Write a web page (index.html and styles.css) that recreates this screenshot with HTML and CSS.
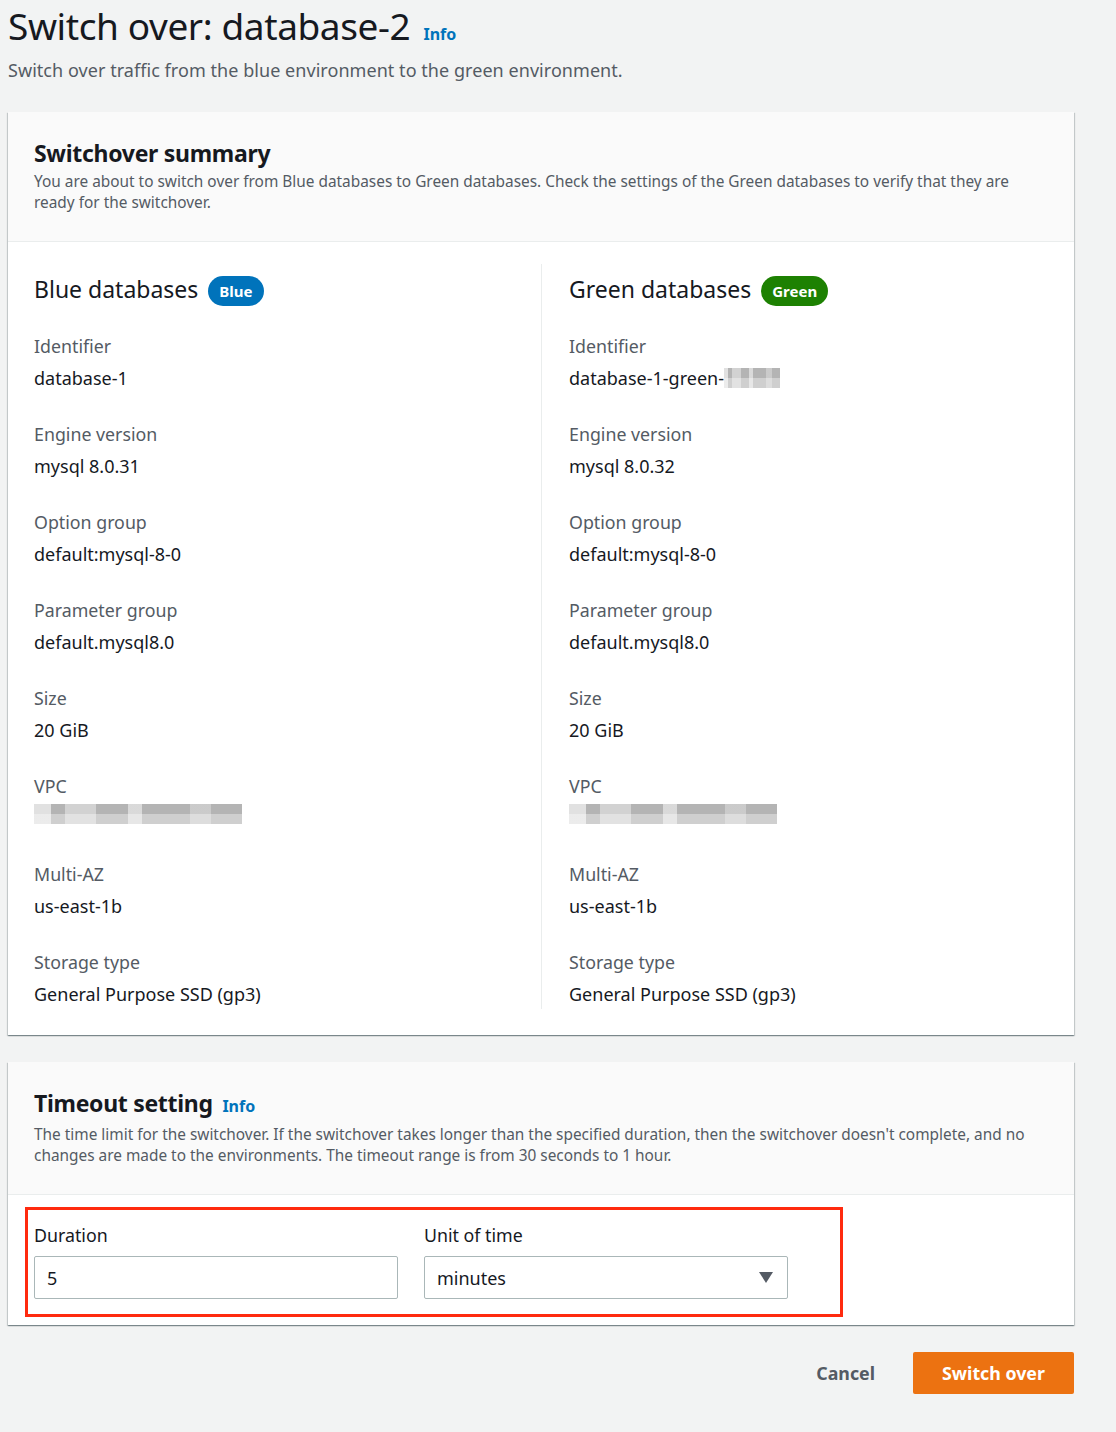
FILE: index.html
```html
<!DOCTYPE html>
<html lang="en">
<head>
    <meta charset="UTF-8">
    <title>Switch over: database-2</title>
    <link rel="stylesheet" href="styles.css">
</head>
<body>
    <div class="page">
        <div class="page-header">
            <h1>Switch over: database-2 <a class="info" href="#">Info</a></h1>
            <p class="subtitle">Switch over traffic from the blue environment to the green environment.</p>
        </div>

        <div class="card">
            <div class="card-header">
                <h2>Switchover summary</h2>
                <p>You are about to switch over from Blue databases to Green databases. Check the settings of the Green databases to verify that they are ready for the switchover.</p>
            </div>
            <div class="card-body columns">
                <div class="column">
                    <h3>Blue databases <span class="badge blue">Blue</span></h3>
                    <div class="field"><div class="label">Identifier</div><div class="value">database-1</div></div>
                    <div class="field"><div class="label">Engine version</div><div class="value">mysql 8.0.31</div></div>
                    <div class="field"><div class="label">Option group</div><div class="value">default:mysql-8-0</div></div>
                    <div class="field"><div class="label">Parameter group</div><div class="value">default.mysql8.0</div></div>
                    <div class="field"><div class="label">Size</div><div class="value">20 GiB</div></div>
                    <div class="field"><div class="label">VPC</div><div class="value"><span class="blur wide"></span></div></div>
                    <div class="field"><div class="label">Multi-AZ</div><div class="value">us-east-1b</div></div>
                    <div class="field"><div class="label">Storage type</div><div class="value">General Purpose SSD (gp3)</div></div>
                </div>
                <div class="column">
                    <h3>Green databases <span class="badge green">Green</span></h3>
                    <div class="field"><div class="label">Identifier</div><div class="value">database-1-green-<span class="blur short"></span></div></div>
                    <div class="field"><div class="label">Engine version</div><div class="value">mysql 8.0.32</div></div>
                    <div class="field"><div class="label">Option group</div><div class="value">default:mysql-8-0</div></div>
                    <div class="field"><div class="label">Parameter group</div><div class="value">default.mysql8.0</div></div>
                    <div class="field"><div class="label">Size</div><div class="value">20 GiB</div></div>
                    <div class="field"><div class="label">VPC</div><div class="value"><span class="blur wide"></span></div></div>
                    <div class="field"><div class="label">Multi-AZ</div><div class="value">us-east-1b</div></div>
                    <div class="field"><div class="label">Storage type</div><div class="value">General Purpose SSD (gp3)</div></div>
                </div>
            </div>
        </div>

        <div class="card">
            <div class="card-header">
                <h2>Timeout setting <a class="info" href="#">Info</a></h2>
                <p>The time limit for the switchover. If the switchover takes longer than the specified duration, then the switchover doesn't complete, and no changes are made to the environments. The timeout range is from 30 seconds to 1 hour.</p>
            </div>
            <div class="card-body form-body">
                <div class="highlight">
                    <div class="form-field">
                        <label>Duration</label>
                        <div class="input">5</div>
                    </div>
                    <div class="form-field">
                        <label>Unit of time</label>
                        <div class="input select">minutes <span class="caret"></span></div>
                    </div>
                </div>
            </div>
        </div>

        <div class="actions">
            <button class="link-btn">Cancel</button>
            <button class="primary-btn">Switch over</button>
        </div>
    </div>
</body>
</html>
```

FILE: styles.css
```css
:root {
    --text: #16191f;
    --muted: #545b64;
    --link: #0073bb;
    --border: #eaeded;
    --bg: #f2f3f3;
}

* {
    box-sizing: border-box;
    margin: 0;
    padding: 0;
}

body {
    background: var(--bg);
    color: var(--text);
    font-family: 'Noto Sans', 'Open Sans', sans-serif;
    padding: 0 8px;
}

.page {
    width: 1066px;
}

h1 {
    font-size: 37px;
    font-weight: 400;
    line-height: 52px;
    letter-spacing: -0.4px;
}

.info {
    color: var(--link);
    font-size: 16px;
    font-weight: 700;
    text-decoration: none;
    letter-spacing: 0;
    margin-left: 4px;
}

.subtitle {
    color: var(--muted);
    font-size: 18px;
    line-height: 20px;
    letter-spacing: 0.05px;
}

.page-header {
    margin-bottom: 32px;
}

.card {
    background: #fff;
    box-shadow: 0 1px 1px 0 rgba(0, 28, 36, 0.3), 1px 1px 1px 0 rgba(0, 28, 36, 0.15), -1px 1px 1px 0 rgba(0, 28, 36, 0.15);
    margin-bottom: 27px;
}

.card-header {
    background: #fafafa;
    border-bottom: 1px solid var(--border);
    padding: 26px 26px 28px;
}

.card-header h2 {
    font-size: 23px;
    font-weight: 700;
    line-height: 30px;
    letter-spacing: -0.3px;
}

.card-header p {
    color: var(--muted);
    font-size: 15.4px;
    line-height: 21px;
    margin-top: 3px;
}

.columns {
    display: grid;
    grid-template-columns: 1fr 1fr;
    padding: 22px 0 26px;
}

.column {
    padding: 30px 26px 0;
}

.column + .column {
    border-left: 1px solid var(--border);
    padding-left: 27px;
}

.column h3 {
    font-size: 23px;
    font-weight: 400;
    line-height: 30px;
    display: flex;
    align-items: center;
    gap: 10px;
    margin-bottom: 28px;
    margin-top: -20px;
}

.badge {
    color: #fff;
    font-size: 15px;
    font-weight: 700;
    border-radius: 16px;
    padding: 0 11px;
    line-height: 30px;
    height: 30px;
    position: relative;
    top: 2px;
}

.badge.blue {
    background: var(--link);
}

.badge.green {
    background: #1d8102;
}

.field {
    height: 88px;
}

.field:last-child {
    height: 61px;
}

.label {
    color: var(--muted);
    font-size: 17.8px;
    line-height: 28px;
    margin-bottom: 4px;
}

.value {
    font-size: 18px;
    line-height: 28px;
    display: flex;
    align-items: center;
}

.blur {
    display: inline-block;
    height: 20px;
    background:
        linear-gradient(90deg, rgba(255,255,255,0.6) 0 8%, transparent 8% 15%, rgba(255,255,255,0.4) 15% 30%, transparent 30% 45%, rgba(255,255,255,0.5) 45% 52%, transparent 52% 75%, rgba(255,255,255,0.3) 75% 85%, transparent 85%),
        linear-gradient(180deg, #b4b4b4 0 50%, #cfcfcf 50%);
}

.blur.wide {
    width: 208px;
}

.blur.short {
    width: 56px;
}

.form-body {
    padding: 12px 17px 8px;
}

.highlight {
    border: 3px solid #ff2a0f;
    width: 818px;
    display: flex;
    gap: 26px;
    padding: 11px 6px 15px;
}

.form-field {
    width: 364px;
}

.form-field label {
    display: block;
    font-size: 17.8px;
    line-height: 28px;
    margin-bottom: 7px;
}

.input {
    border: 1px solid #aab7b8;
    border-radius: 2px;
    height: 43px;
    padding: 0 12px;
    font-size: 18px;
    display: flex;
    align-items: center;
    justify-content: space-between;
}

.caret {
    width: 0;
    height: 0;
    border-left: 7px solid transparent;
    border-right: 7px solid transparent;
    border-top: 11px solid #545b64;
    margin-right: 2px;
}

.actions {
    display: flex;
    justify-content: flex-end;
    align-items: center;
    gap: 38px;
}

button {
    font-family: inherit;
    font-size: 17.8px;
    font-weight: 700;
    border: none;
    cursor: pointer;
}

.link-btn {
    background: none;
    color: var(--muted);
}

.primary-btn {
    background: #ec7211;
    color: #fff;
    border-radius: 2px;
    width: 161px;
    height: 42px;
}
```
